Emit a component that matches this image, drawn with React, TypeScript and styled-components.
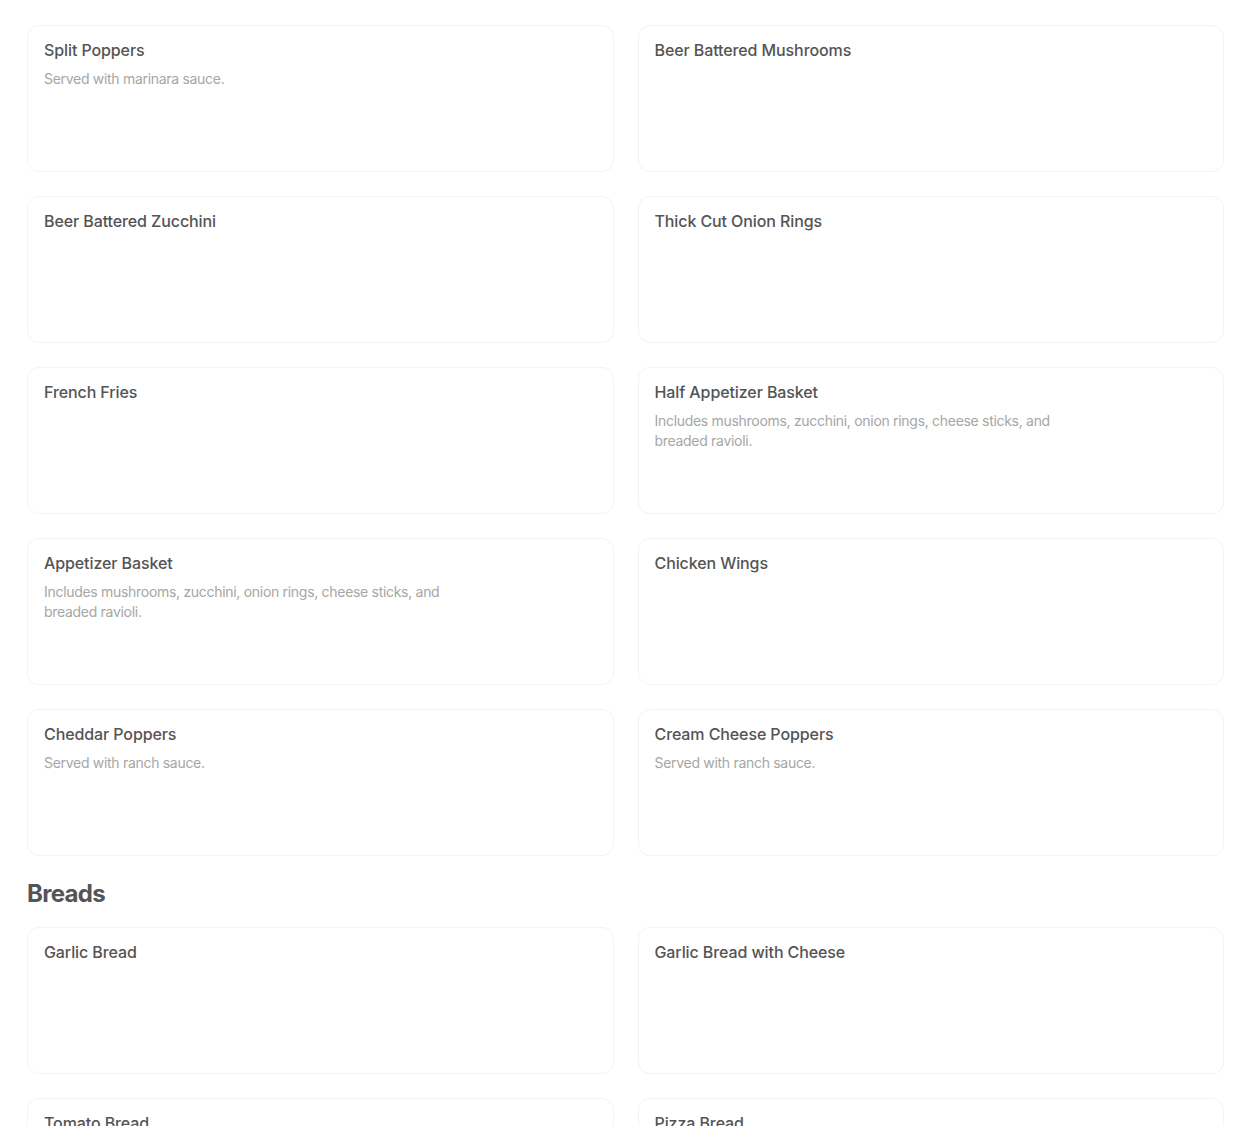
import React from 'react';
import styled, { createGlobalStyle } from 'styled-components';

const GlobalStyle = createGlobalStyle`
  html, body {
    margin: 0;
    padding: 0;
    background: #fff;
  }
  body {
    font-family: Inter, 'Noto Sans', sans-serif;
    -webkit-font-smoothing: antialiased;
  }
`;

const Page = styled.main`
  padding: 25px 26px 40px 27px;
`;

const Section = styled.section`
  display: flex;
  flex-direction: column;
`;

const SectionTitle = styled.h2`
  margin: 22px 0 17px;
  font-size: 24px;
  line-height: 32px;
  font-weight: 700;
  color: #545454;
  letter-spacing: -0.7px;
`;

const Grid = styled.div`
  display: grid;
  grid-template-columns: 1fr 1fr;
  column-gap: 24px;
  row-gap: 24px;
`;

const Card = styled.article`
  box-sizing: border-box;
  height: 147px;
  border: 1px solid #f3f3f3;
  border-radius: 12px;
  padding: 14px 16px;
  display: flex;
  background: #fff;
`;

const Text = styled.div`
  display: flex;
  flex-direction: column;
  gap: 9px;
  max-width: 420px;
`;

const Name = styled.h3`
  margin: 0;
  font-size: 16px;
  line-height: 20px;
  font-weight: 500;
  color: #545454;
  letter-spacing: -0.1px;
`;

const Description = styled.p`
  margin: 0;
  font-size: 14px;
  line-height: 20px;
  font-weight: 400;
  color: #a6a6a6;
  letter-spacing: -0.3px;
`;

interface Item {
  name: string;
  description?: string;
}

const basket = 'Includes mushrooms, zucchini, onion rings, cheese sticks, and breaded ravioli.';

const appetizers: Item[] = [
  { name: 'Split Poppers', description: 'Served with marinara sauce.' },
  { name: 'Beer Battered Mushrooms' },
  { name: 'Beer Battered Zucchini' },
  { name: 'Thick Cut Onion Rings' },
  { name: 'French Fries' },
  { name: 'Half Appetizer Basket', description: basket },
  { name: 'Appetizer Basket', description: basket },
  { name: 'Chicken Wings' },
  { name: 'Cheddar Poppers', description: 'Served with ranch sauce.' },
  { name: 'Cream Cheese Poppers', description: 'Served with ranch sauce.' },
];

const breads: Item[] = [
  { name: 'Garlic Bread' },
  { name: 'Garlic Bread with Cheese' },
  { name: 'Tomato Bread' },
  { name: 'Pizza Bread' },
];

const MenuCard: React.FC<{ item: Item }> = ({ item }) => (
  <Card>
    <Text>
      <Name>{item.name}</Name>
      {item.description && <Description>{item.description}</Description>}
    </Text>
  </Card>
);

const App: React.FC = () => (
  <>
    <GlobalStyle />
    <Page>
      <Section>
        <Grid>
          {appetizers.map((item) => (
            <MenuCard key={item.name} item={item} />
          ))}
        </Grid>
      </Section>
      <Section>
        <SectionTitle>Breads</SectionTitle>
        <Grid>
          {breads.map((item) => (
            <MenuCard key={item.name} item={item} />
          ))}
        </Grid>
      </Section>
    </Page>
  </>
);

export default App;
